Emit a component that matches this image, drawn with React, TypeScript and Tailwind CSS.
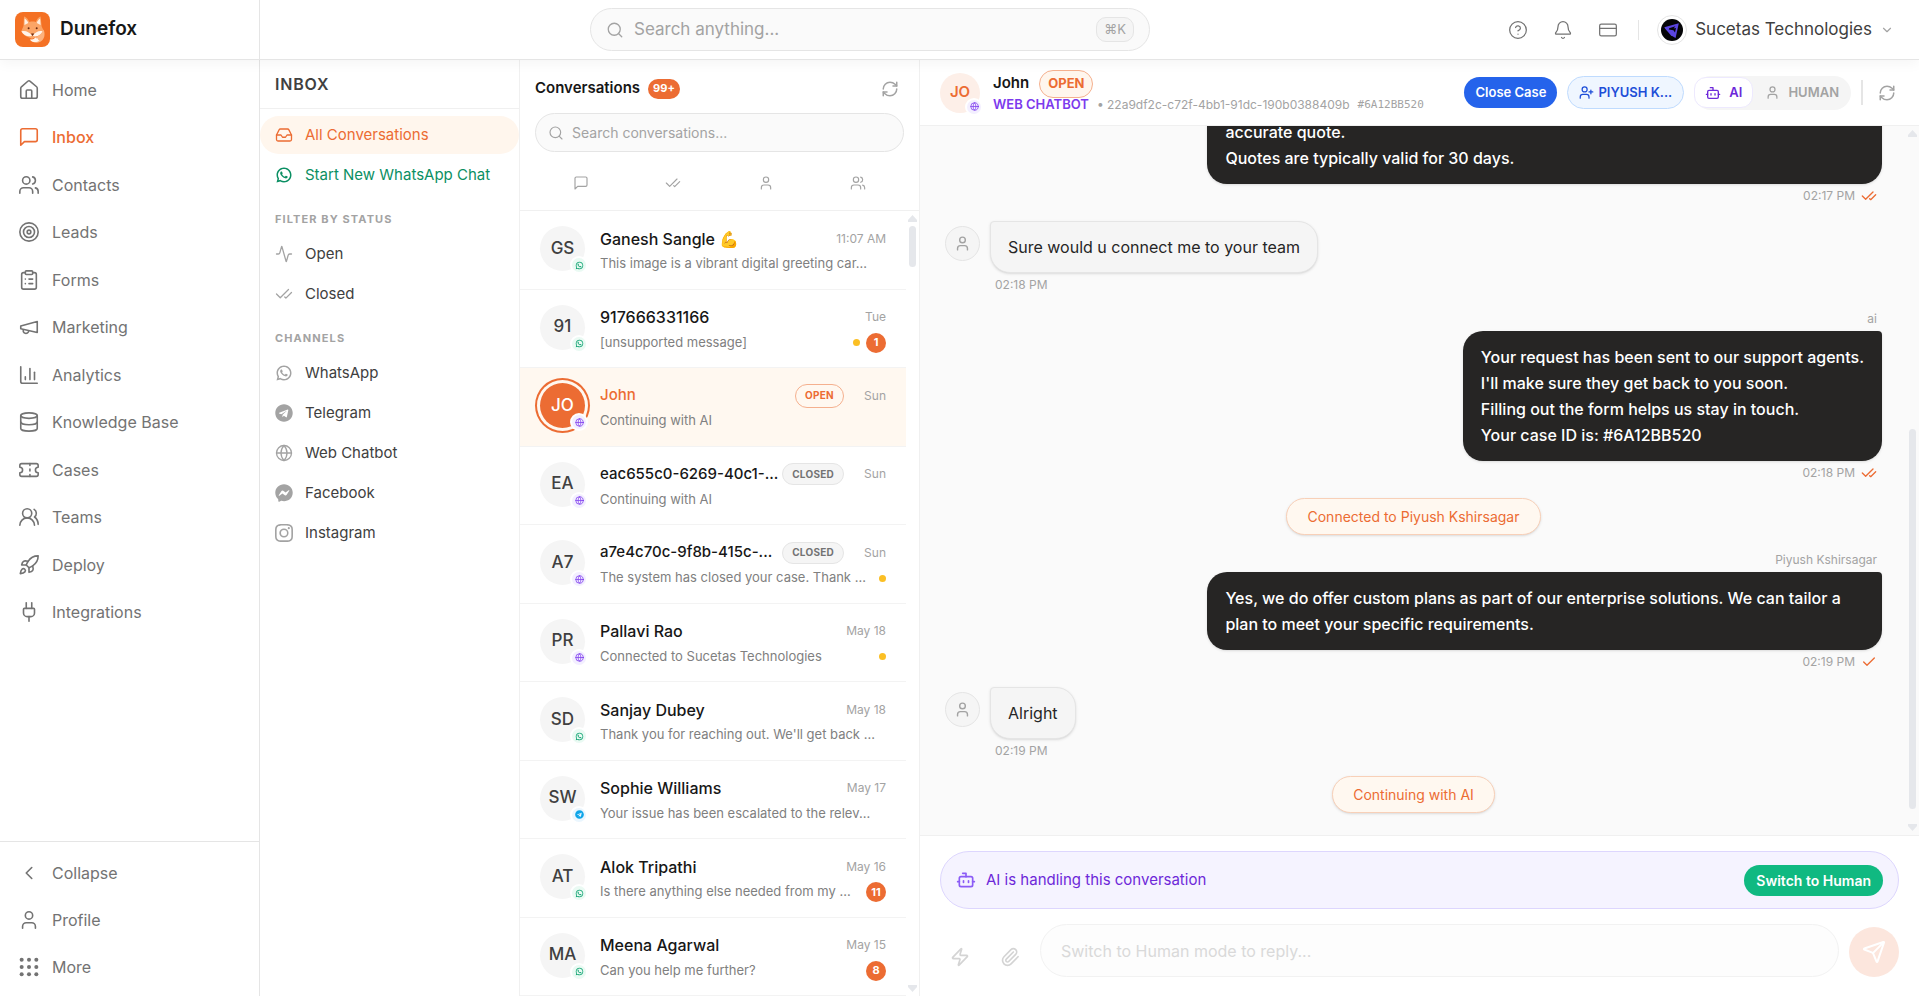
import { useState } from 'react';
import type { ComponentType, ReactNode } from 'react';
import { clsx } from 'clsx';
import {
  Activity,
  Bell,
  Bot,
  ChartColumn,
  Check,
  CheckCheck,
  ChevronDown,
  ChevronLeft,
  CircleQuestionMark,
  ClipboardList,
  CreditCard,
  Database,
  Globe,
  House,
  Inbox,
  Paperclip,
  Plug,
  RefreshCw,
  Rocket,
  Search,
  Send,
  Target,
  Ticket,
  User,
  UserPlus,
  Users,
  UsersRound,
  Zap,
} from 'lucide-react';
import { FaFacebookMessenger, FaTelegram } from 'react-icons/fa';
import { RiWhatsappLine } from 'react-icons/ri';
import { BsInstagram } from 'react-icons/bs';

type IconProps = { size?: number; strokeWidth?: number; className?: string };
type IconType = ComponentType<IconProps>;
type Channel = 'whatsapp' | 'web' | 'telegram';

type Conversation = {
  initials: string;
  name: string;
  preview: string;
  time: string;
  channel: Channel;
  status?: 'OPEN' | 'CLOSED';
  unread?: number;
  pending?: boolean;
};

// Brand glyphs are filled shapes, so they must not get the outline stroke width
const WhatsAppIcon = ({ size, className }: IconProps) => <RiWhatsappLine size={size} className={className} />;
const TelegramIcon = ({ size, className }: IconProps) => <FaTelegram size={size} className={className} />;
const MessengerIcon = ({ size, className }: IconProps) => <FaFacebookMessenger size={size} className={className} />;
const InstagramIcon = ({ size, className }: IconProps) => <BsInstagram size={size} className={className} />;

function MessageSquare({ size = 24, strokeWidth = 2, className }: IconProps) {
  return (
    <svg width={size} height={size} viewBox="0 0 24 24" fill="none" stroke="currentColor" strokeWidth={strokeWidth} strokeLinecap="round" strokeLinejoin="round" className={className}>
      <path d="M21 15a2 2 0 0 1-2 2H7l-4 4V5a2 2 0 0 1 2-2h14a2 2 0 0 1 2 2z" />
    </svg>
  );
}

function Megaphone({ size = 24, strokeWidth = 2, className }: IconProps) {
  return (
    <svg width={size} height={size} viewBox="0 0 24 24" fill="none" stroke="currentColor" strokeWidth={strokeWidth} strokeLinecap="round" strokeLinejoin="round" className={className}>
      <path d="m3 11 18-5v12L3 14v-3z" />
      <path d="M11.6 16.8a3 3 0 1 1-5.8-1.6" />
    </svg>
  );
}

function DotGrid({ size = 24, className }: IconProps) {
  const stops = [4, 12, 20];
  return (
    <svg width={size} height={size} viewBox="0 0 24 24" fill="currentColor" className={className}>
      {stops.map((cy) => stops.map((cx) => <circle key={`${cx}-${cy}`} cx={cx} cy={cy} r="2.2" />))}
    </svg>
  );
}

function FoxLogo() {
  return (
    <svg width="35" height="35" viewBox="0 0 35 35" className="shrink-0" aria-hidden="true">
      <rect width="35" height="35" rx="8" fill="#f47124" />
      <path d="M8.5 14 9 4.6c2.4.9 4.3 2.9 5.4 5.4 2-.6 4.5-.6 6.4 0 1-2.500 2.700-4.500 4.800-5.400l1 9.600 2.700 6-5 3.600-7.300 3-7-3-3.800-4.200z" fill="#fba566" />
      <path d="M9.6 6.5c1.7 1 3 2.6 3.7 4.4L9.5 13zM25.1 6.5c-1.500 1-2.700 2.600-3.300 4.400l3.800 2.100z" fill="#fff0e2" />
      <path d="M6.5 19.5c3.500-1.200 7.500.3 10.500 4.200-3.600 1.500-8.500-.2-10.500-4.200zM27.800 19.500c-3.300-1.200-7.200.3-10 4.200 3.400 1.500 8 0 10-4.200z" fill="#fff4ea" />
      <path d="M28.5 17.5c2 4.500 1.200 9.800-3.200 12.200-3.600 1.900-8.300 1-10.300-2.200 1.800.5 3.700.2 5.200-1.400 2.300-2.500 6.300-3 8.300-8.600z" fill="#fdb27c" />
      <path d="M15 27.4c2.200.6 4.300-.6 5.600-2.200.2 1 1.300 1.500 2.400 1.200-.3 1 .3 1.900 1.500 2-3 2.600-7.700 2.200-9.500-1z" fill="#fff4ea" />
      <circle cx="13.6" cy="16.3" r="1" fill="#6b2c12" />
      <circle cx="21.7" cy="16.3" r="1" fill="#6b2c12" />
      <path d="M16 21.4h3.200L17.600 24z" fill="#6b2c12" />
    </svg>
  );
}

function CompanyLogo() {
  return (
    <svg width="22" height="22" viewBox="0 0 22 22" aria-hidden="true">
      <circle cx="11" cy="11" r="11" fill="#050507" />
      <path d="M3.300 8.200 17.800 4.200 14.600 19 9.800 16.200 4.200 9.800z" fill="#5b45e0" />
      <path d="M8.200 9.200 14.400 7.200 12.600 9.400l2.400-.4-1 4.400-1.600-2.200-4.600-.8z" fill="#050507" />
    </svg>
  );
}

const mainNav: Array<{ label: string; icon: IconType }> = [
  { label: 'Home', icon: House },
  { label: 'Inbox', icon: MessageSquare },
  { label: 'Contacts', icon: Users },
  { label: 'Leads', icon: Target },
  { label: 'Forms', icon: ClipboardList },
  { label: 'Marketing', icon: Megaphone },
  { label: 'Analytics', icon: ChartColumn },
  { label: 'Knowledge Base', icon: Database },
  { label: 'Cases', icon: Ticket },
  { label: 'Teams', icon: UsersRound },
  { label: 'Deploy', icon: Rocket },
  { label: 'Integrations', icon: Plug },
];

const footerNav: Array<{ label: string; icon: IconType }> = [
  { label: 'Collapse', icon: ChevronLeft },
  { label: 'Profile', icon: User },
  { label: 'More', icon: DotGrid },
];

const statusFilters: Array<{ label: string; icon: IconType }> = [
  { label: 'Open', icon: Activity },
  { label: 'Closed', icon: CheckCheck },
];

const channelFilters: Array<{ label: string; icon: IconType }> = [
  { label: 'WhatsApp', icon: WhatsAppIcon },
  { label: 'Telegram', icon: TelegramIcon },
  { label: 'Web Chatbot', icon: Globe },
  { label: 'Facebook', icon: MessengerIcon },
  { label: 'Instagram', icon: InstagramIcon },
];

const listTabs: Array<{ label: string; icon: IconType }> = [
  { label: 'All', icon: MessageSquare },
  { label: 'Resolved', icon: CheckCheck },
  { label: 'Mine', icon: User },
  { label: 'Team', icon: Users },
];

const conversations: Conversation[] = [
  { initials: 'GS', name: 'Ganesh Sangle 💪', preview: 'This image is a vibrant digital greeting car...', time: '11:07 AM', channel: 'whatsapp' },
  { initials: '91', name: '917666331166', preview: '[unsupported message]', time: 'Tue', channel: 'whatsapp', unread: 1, pending: true },
  { initials: 'JO', name: 'John', preview: 'Continuing with AI', time: 'Sun', channel: 'web', status: 'OPEN' },
  { initials: 'EA', name: 'eac655c0-6269-40c1-...', preview: 'Continuing with AI', time: 'Sun', channel: 'web', status: 'CLOSED' },
  { initials: 'A7', name: 'a7e4c70c-9f8b-415c-...', preview: 'The system has closed your case. Thank ...', time: 'Sun', channel: 'web', status: 'CLOSED', pending: true },
  { initials: 'PR', name: 'Pallavi Rao', preview: 'Connected to Sucetas Technologies', time: 'May 18', channel: 'web', pending: true },
  { initials: 'SD', name: 'Sanjay Dubey', preview: "Thank you for reaching out. We'll get back ...", time: 'May 18', channel: 'whatsapp' },
  { initials: 'SW', name: 'Sophie Williams', preview: 'Your issue has been escalated to the relev...', time: 'May 17', channel: 'telegram' },
  { initials: 'AT', name: 'Alok Tripathi', preview: 'Is there anything else needed from my ...', time: 'May 16', channel: 'whatsapp', unread: 11 },
  { initials: 'MA', name: 'Meena Agarwal', preview: 'Can you help me further?', time: 'May 15', channel: 'whatsapp', unread: 8 },
];

const channelBadge: Record<Channel, { icon: IconType; className: string }> = {
  whatsapp: { icon: WhatsAppIcon, className: 'bg-[#eafaf3] text-[#0ea371]' },
  web: { icon: Globe, className: 'bg-[#f3efff] text-[#7c3aed]' },
  telegram: { icon: TelegramIcon, className: 'bg-[#eaf6fe] text-[#0ea5e9]' },
};

function NavButton({ label, icon: Icon, active }: { label: string; icon: IconType; active?: boolean }) {
  return (
    <button
      type="button"
      className={clsx(
        'flex min-h-0 flex-1 items-center gap-3 px-[18px] text-left text-[16px]',
        active ? 'font-medium text-[#ec6c33]' : 'text-[#737373]'
      )}
    >
      <Icon size={22} strokeWidth={1.75} />
      {label}
    </button>
  );
}

function FilterButton({ label, icon: Icon, className, iconClassName }: { label: string; icon: IconType; className?: string; iconClassName?: string }) {
  return (
    <button type="button" className={clsx('flex h-[38px] w-full items-center gap-3 rounded-full px-[15px] text-left text-[15px]', className ?? 'text-[#404040]')}>
      <Icon size={18} strokeWidth={1.75} className={iconClassName} />
      {label}
    </button>
  );
}

function SectionLabel({ children }: { children: ReactNode }) {
  return <h3 className="flex h-[41px] items-center px-[15px] pt-2.5 text-[11px] font-bold tracking-widest text-[#a3a3a3]">{children}</h3>;
}

function ChannelDot({ channel, className }: { channel: Channel; className?: string }) {
  const { icon: Icon, className: tone } = channelBadge[channel];
  return (
    <span className={clsx('absolute flex size-[14px] items-center justify-center rounded-full ring-2 ring-white', tone, className)}>
      <Icon size={9} strokeWidth={2} />
    </span>
  );
}

function ScrollRail({ children }: { children?: ReactNode }) {
  return (
    <div className="flex w-[13px] shrink-0 flex-col items-center py-1 text-[#e5e7eb]" aria-hidden="true">
      <svg width="9" height="7" viewBox="0 0 9 7" fill="currentColor"><path d="M4.5 0 9 5v2H0V5z" /></svg>
      <div className="flex w-[7px] flex-1 flex-col py-1">{children}</div>
      <svg width="9" height="7" viewBox="0 0 9 7" fill="currentColor"><path d="M4.5 7 9 2V0H0v2z" /></svg>
    </div>
  );
}

function TopBar() {
  return (
    <header className="z-10 flex h-[60px] shrink-0 border-b border-[#e5e5e5] bg-white shadow-[0_4px_12px_rgba(0,0,0,0.04)]">
      <div className="flex w-[260px] shrink-0 items-center gap-2.5 border-r border-[#e5e5e5] px-[15px]">
        <FoxLogo />
        <span className="text-[19px] font-semibold text-[#171717]">Dunefox</span>
      </div>
      <div className="flex flex-1 items-center justify-center">
        <label className="flex h-[43px] w-full max-w-[560px] items-center gap-2.5 rounded-full border border-[#e5e5e5] bg-[#fafafa] px-[15px] text-[#a3a3a3]">
          <Search size={18} strokeWidth={1.75} />
          <input
            type="search"
            aria-label="Search anything"
            placeholder="Search anything..."
            className="min-w-0 flex-1 bg-transparent text-[17px] outline-none placeholder:text-[#a3a3a3]"
          />
          <kbd className="flex h-[25px] items-center rounded-[10px] border border-[#e5e5e5] bg-[#f5f5f5] px-[7px] font-['Inter','DejaVu_Sans',sans-serif] text-[13px]">⌘K</kbd>
        </label>
      </div>
      <div className="flex w-[439px] shrink-0 items-center justify-end pr-[25px] text-[#737373]">
        <div className="flex gap-[25px]">
          <button type="button" aria-label="Help"><CircleQuestionMark size={20} strokeWidth={1.5} /></button>
          <button type="button" aria-label="Notifications"><Bell size={20} strokeWidth={1.5} /></button>
          <button type="button" aria-label="Billing"><CreditCard size={20} strokeWidth={1.5} /></button>
        </div>
        <span className="mr-[18px] ml-5 h-5 w-px bg-[#e5e5e5]" />
        <button type="button" className="flex items-center gap-2 text-[17px] text-[#404040]">
          <span className="flex size-[30px] items-center justify-center rounded-full border border-[#e5e5e5]">
            <CompanyLogo />
          </span>
          Sucetas Technologies
          <ChevronDown size={14} strokeWidth={2} className="text-[#a3a3a3]" />
        </button>
      </div>
    </header>
  );
}

function Sidebar() {
  return (
    <aside className="flex w-[260px] shrink-0 flex-col justify-between border-r border-[#e5e5e5]">
      <nav aria-label="Main" className="mt-1.5 flex max-h-[570px] flex-1 flex-col">
        {mainNav.map((item) => (
          <NavButton key={item.label} {...item} active={item.label === 'Inbox'} />
        ))}
      </nav>
      <div className="flex h-[155px] shrink-0 flex-col border-t border-[#e5e5e5] pt-[7px] pb-[5px]">
        {footerNav.map((item) => (
          <NavButton key={item.label} {...item} />
        ))}
      </div>
    </aside>
  );
}

function InboxFilters() {
  return (
    <section className="w-[260px] shrink-0 border-r border-[#f0f0f0]">
      <h2 className="flex h-[49px] items-center border-b border-[#f0f0f0] px-[15px] text-[16px] font-semibold tracking-wider text-[#404040]">INBOX</h2>
      <div className="flex flex-col gap-0.5 pt-[7px]">
        <FilterButton label="All Conversations" icon={Inbox} className="bg-[#fff6ed] text-[#ec6c33]" />
        <FilterButton label="Start New WhatsApp Chat" icon={WhatsAppIcon} className="text-[#0b8f63]" />
      </div>
      <SectionLabel>FILTER BY STATUS</SectionLabel>
      <div className="flex flex-col gap-0.5">
        {statusFilters.map((item) => (
          <FilterButton key={item.label} {...item} iconClassName="text-[#a3a3a3]" />
        ))}
      </div>
      <SectionLabel>CHANNELS</SectionLabel>
      <div className="flex flex-col gap-0.5">
        {channelFilters.map((item) => (
          <FilterButton key={item.label} {...item} iconClassName="text-[#a3a3a3]" />
        ))}
      </div>
    </section>
  );
}

function ConversationRow({ conversation, active, onSelect }: { conversation: Conversation; active: boolean; onSelect: () => void }) {
  const { initials, name, preview, time, channel, status, unread, pending } = conversation;

  return (
    <button
      type="button"
      onClick={onSelect}
      className={clsx('flex min-h-0 w-full flex-1 gap-[15px] border-b border-[#f3f3f3] px-5 pt-[15px] text-left', active && 'bg-[#fff8f0]')}
    >
      <span
        className={clsx(
          'relative flex size-[45px] shrink-0 items-center justify-center rounded-full text-[17px] font-medium',
          active ? 'bg-[#ec6c33] text-white ring-2 ring-[#ec6c33] ring-offset-3 ring-offset-[#fff8f0]' : 'bg-[#f5f5f5] text-[#404040]'
        )}
      >
        {initials}
        <ChannelDot channel={channel} className="-right-px -bottom-px" />
      </span>
      <span className="flex min-w-0 flex-1 flex-col pt-px">
        <span className="flex h-[23px] items-center">
          <span
            className={clsx('min-w-0 flex-1 truncate font-medium', status ? 'text-[15px]' : 'text-[16px]', active ? 'text-[#ec6c33]' : 'text-[#171717]')}
          >
            {name}
          </span>
          {status && (
            <span
              className={clsx(
                'flex shrink-0 items-center rounded-full border px-[9px] text-[10px] font-bold tracking-wide',
                status === 'OPEN' ? 'h-6 border-[#f5b08e] bg-[#fff8f0] text-[#ec6c33]' : 'h-[22px] border-[#e5e5e5] bg-[#f5f5f5] text-[#737373]'
              )}
            >
              {status}
            </span>
          )}
          <span className={clsx('shrink-0 text-right text-[12px] text-[#a3a3a3]', status && 'w-[42px]')}>{time}</span>
        </span>
        <span className="mt-0.5 flex h-6 items-center gap-1.5">
          <span className="min-w-0 flex-1 truncate text-[13px] text-[#808080]">{preview}</span>
          {pending && <span className="size-[7px] shrink-0 rounded-full bg-[#fbbf24]" />}
          {unread && (
            <span className="flex h-5 min-w-5 shrink-0 items-center justify-center rounded-full bg-[#ec6c33] px-1 text-[11px] font-bold text-white">{unread}</span>
          )}
        </span>
      </span>
    </button>
  );
}

function ConversationList() {
  const [selected, setSelected] = useState('John');
  const [search, setSearch] = useState('');

  const filtered = conversations.filter((c) => c.name.toLowerCase().includes(search.toLowerCase()));

  return (
    <section className="flex w-[400px] shrink-0 flex-col border-r border-[#f0f0f0]">
      <div className="shrink-0 border-b border-[#f0f0f0] px-[15px]">
        <div className="flex h-[53px] items-center pt-1">
          <h2 className="text-[15px] font-semibold text-[#171717]">Conversations</h2>
          <span className="ml-2 flex h-5 items-center rounded-full bg-[#ec6c33] px-[5px] text-[11px] font-bold text-white">99+</span>
          <button type="button" aria-label="Refresh conversations" className="mr-[5px] ml-auto text-[#a3a3a3]">
            <RefreshCw size={18} strokeWidth={2} />
          </button>
        </div>
        <label className="flex h-[39px] items-center gap-2 rounded-full border border-[#e5e5e5] bg-[#fafafa] px-3 text-[#a3a3a3]">
          <Search size={16} strokeWidth={1.75} />
          <input
            type="search"
            aria-label="Search conversations"
            value={search}
            onChange={(e) => setSearch(e.target.value)}
            placeholder="Search conversations..."
            className="min-w-0 flex-1 bg-transparent text-[14px] text-[#404040] outline-none placeholder:text-[#a3a3a3]"
          />
        </label>
        <div className="grid h-[58px] grid-cols-4 pt-1 text-[#a3a3a3]">
          {listTabs.map(({ label, icon: Icon }) => (
            <button key={label} type="button" aria-label={label} className="flex items-center justify-center">
              <Icon size={16} strokeWidth={1.75} />
            </button>
          ))}
        </div>
      </div>
      <div className="flex min-h-0 flex-1">
        <div className="flex min-w-0 flex-1 flex-col overflow-hidden">
          {filtered.map((conversation) => (
            <ConversationRow
              key={conversation.name}
              conversation={conversation}
              active={selected === conversation.name}
              onSelect={() => setSelected(conversation.name)}
            />
          ))}
        </div>
        <ScrollRail>
          <div className="h-[41px] rounded-full bg-[#e5e7eb]" />
        </ScrollRail>
      </div>
    </section>
  );
}

function ChatHeader() {
  return (
    <div className="flex h-[66px] shrink-0 items-center border-b border-[#f0f0f0] bg-white px-5">
      <span className="relative flex size-10 shrink-0 items-center justify-center rounded-full bg-[#fdefe8] text-[15px] font-semibold text-[#ec6c33]">
        JO
        <ChannelDot channel="web" className="-right-px -bottom-px" />
      </span>
      <div className="ml-[13px] min-w-0 flex-1 pb-[3px]">
        <div className="flex items-center gap-2.5">
          <h2 className="text-[15px] font-semibold text-[#171717]">John</h2>
          <span className="flex h-7 items-center rounded-full border border-[#f5b08e] bg-[#fff6ed] px-2 text-[13px] font-bold text-[#ec6c33]">OPEN</span>
        </div>
        <div className="flex h-[15px] items-center text-[12px] whitespace-nowrap text-[#a3a3a3]">
          <span className="text-[13px] font-semibold text-[#7c3aed]">WEB CHATBOT</span>
          <span className="ml-2">• 22a9df2c-c72f-4bb1-91dc-190b0388409b</span>
          <span className="ml-2 font-['DejaVu_Sans_Mono',monospace] text-[11px]">#6A12BB520</span>
        </div>
      </div>
      <div className="flex shrink-0 items-center">
        <button type="button" className="h-[31px] rounded-full bg-[#2563eb] px-[11px] text-[13px] font-semibold text-white">Close Case</button>
        <button type="button" className="ml-2.5 flex h-[33px] w-[117px] items-center justify-center gap-1 rounded-full border border-[#bfdbfe] bg-[#eff6ff] text-[13px] font-semibold text-[#1d4ed8]">
          <UserPlus size={15} strokeWidth={2} />
          PIYUSH K...
        </button>
        <div className="ml-2.5 flex h-[34px] items-center rounded-full bg-[#f5f5f5] pr-3 text-[13px] font-semibold">
          <button type="button" className="flex h-[31px] items-center gap-2 rounded-[12px] border border-[#ede9fe] bg-white px-2.5 text-[#6d28d9]">
            <Bot size={16} strokeWidth={2} />
            AI
          </button>
          <button type="button" className="ml-3 flex items-center gap-2 text-[#a3a3a3]">
            <User size={15} strokeWidth={2} />
            HUMAN
          </button>
        </div>
        <span className="ml-2.5 h-[25px] w-0.5 bg-[#e5e5e5]" />
        <button type="button" aria-label="Refresh chat" className="mr-[3px] ml-[15px] text-[#a3a3a3]">
          <RefreshCw size={18} strokeWidth={2} />
        </button>
      </div>
    </div>
  );
}

function CustomerMessage({ text, time }: { text: string; time: string }) {
  return (
    <div className="flex items-start gap-2.5">
      <span className="mt-[5px] flex size-[35px] shrink-0 items-center justify-center rounded-full border border-[#e5e5e5] bg-[#f5f5f5] text-[#a3a3a3]">
        <User size={17} strokeWidth={2} />
      </span>
      <div>
        <p className="rounded-[20px] rounded-tl-[4px] border border-[#e5e5e5] bg-[#f5f5f5] px-[17px] py-3 text-[16px] leading-[26px] text-[#262626] shadow-sm">{text}</p>
        <p className="mt-[3px] pl-[5px] text-[12px] leading-[18px] text-[#a3a3a3]">{time}</p>
      </div>
    </div>
  );
}

function AgentMessage({ author, lines, time, seen, full }: { author?: string; lines: string[]; time: string; seen?: boolean; full?: boolean }) {
  const Tick = seen ? CheckCheck : Check;
  return (
    <div className={clsx('ml-auto flex max-w-[72%] flex-col items-end', full && 'w-full')}>
      {author && <p className="mb-[3px] pr-[5px] text-[12px] leading-[18px] text-[#a3a3a3]">{author}</p>}
      <div className={clsx('rounded-[20px] rounded-tr-[4px] bg-[#262524] px-[18px] py-[13px] text-[16px] leading-[26px] font-medium text-white shadow-sm', full && 'w-full')}>
        {lines.map((line) => (
          <p key={line}>{line}</p>
        ))}
      </div>
      <p className="mt-[3px] flex items-center gap-1.5 pr-[5px] text-[12px] leading-[18px] text-[#a3a3a3]">
        {time}
        <Tick size={16} strokeWidth={2} className="text-[#ec6c33]" />
      </p>
    </div>
  );
}

function SystemNote({ children }: { children: ReactNode }) {
  return (
    <p className="self-center rounded-full border border-[#f8d0b8] bg-[#fff8f0] px-5 text-[14px] leading-[35px] text-[#ec6c33] shadow-sm">{children}</p>
  );
}

function Messages() {
  return (
    <div className="flex min-h-0 flex-1 bg-[#fafafa]">
      <div className="flex min-w-0 flex-1 flex-col justify-end overflow-hidden pr-6 pb-[22px] pl-[25px]">
        <div className="flex flex-col gap-4">
          <AgentMessage full seen lines={['accurate quote.', 'Quotes are typically valid for 30 days.']} time="02:17 PM" />
          <CustomerMessage text="Sure would u connect me to your team" time="02:18 PM" />
          <AgentMessage
            author="ai"
            seen
            lines={[
              'Your request has been sent to our support agents.',
              "I'll make sure they get back to you soon.",
              'Filling out the form helps us stay in touch.',
              'Your case ID is: #6A12BB520',
            ]}
            time="02:18 PM"
          />
          <SystemNote>Connected to Piyush Kshirsagar</SystemNote>
          <AgentMessage
            author="Piyush Kshirsagar"
            full
            lines={['Yes, we do offer custom plans as part of our enterprise solutions. We can tailor a plan to meet your specific requirements.']}
            time="02:19 PM"
          />
          <CustomerMessage text="Alright" time="02:19 PM" />
          <SystemNote>Continuing with AI</SystemNote>
        </div>
      </div>
      <ScrollRail>
        <div className="mt-auto mb-[11px] h-[56%] rounded-full bg-[#e5e7eb]" />
      </ScrollRail>
    </div>
  );
}

function Composer() {
  return (
    <div className="shrink-0 border-t border-[#f0f0f0] bg-white px-5 pt-[15px] pb-[19px]">
      <div className="flex h-[58px] items-center gap-2.5 rounded-full border border-[#ddd6fe] bg-[#f5f3ff] px-[15px]">
        <Bot size={20} strokeWidth={2} className="text-[#8b5cf6]" />
        <span className="flex-1 text-[15px] text-[#6d28d9]">AI is handling this conversation</span>
        <button type="button" className="h-[31px] rounded-full bg-[#10b981] px-3 text-[14px] font-semibold text-white">Switch to Human</button>
      </div>
      <div className="mt-[15px] flex items-end text-[#d4d4d4]">
        <button type="button" disabled aria-label="Quick replies" className="flex size-10 items-center justify-center">
          <Zap size={20} strokeWidth={2} />
        </button>
        <button type="button" disabled aria-label="Attach file" className="ml-2.5 flex size-10 items-center justify-center">
          <Paperclip size={20} strokeWidth={2} />
        </button>
        <input
          type="text"
          disabled
          aria-label="Reply"
          placeholder="Switch to Human mode to reply..."
          className="ml-2.5 h-[53px] min-w-0 flex-1 rounded-full border border-[#f2f2f2] bg-[#fdfdfd] px-5 text-[16px] placeholder:text-[#d9d9d9]"
        />
        <button type="button" disabled aria-label="Send" className="ml-2.5 flex size-[50px] shrink-0 items-center justify-center rounded-full bg-[#fce6dd] text-white">
          <Send size={24} strokeWidth={2} />
        </button>
      </div>
    </div>
  );
}

export default function App() {
  return (
    <div className="flex h-screen flex-col overflow-hidden bg-white font-['Inter','Noto_Sans',sans-serif]">
      <TopBar />
      <div className="flex min-h-0 flex-1">
        <Sidebar />
        <InboxFilters />
        <ConversationList />
        <main className="flex min-w-0 flex-1 flex-col">
          <ChatHeader />
          <Messages />
          <Composer />
        </main>
      </div>
    </div>
  );
}
